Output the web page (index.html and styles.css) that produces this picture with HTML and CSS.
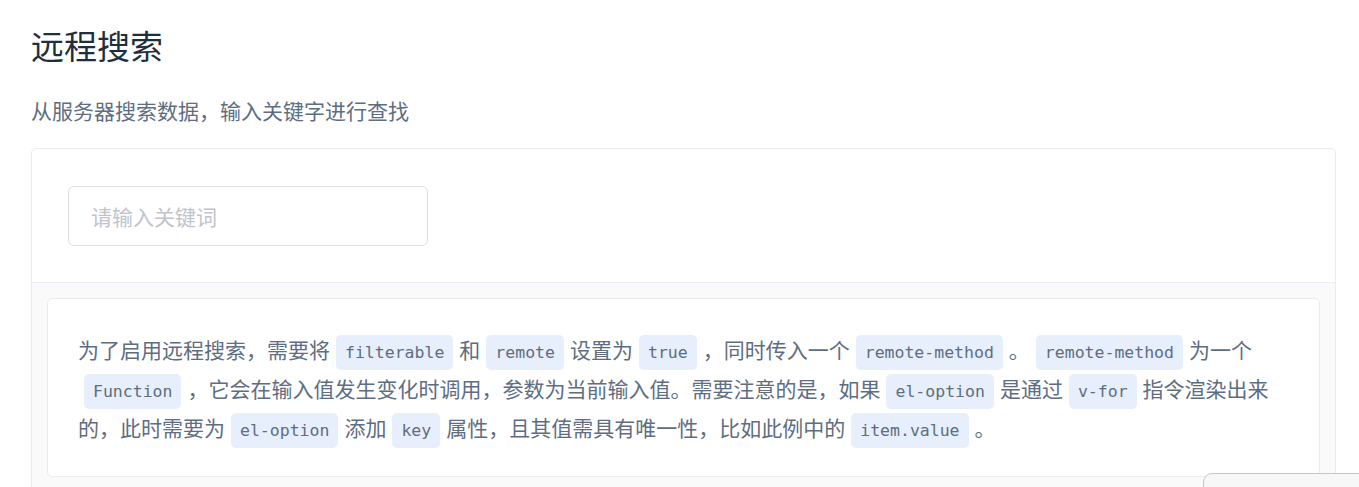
FILE: index.html
```html
<!DOCTYPE html>
<html lang="zh-CN">
<head>
<meta charset="utf-8">
<title>远程搜索</title>
<link rel="stylesheet" href="styles.css">
</head>
<body>
<main class="page">
  <h3 class="title">远程搜索</h3>
  <p class="lead">从服务器搜索数据，输入关键字进行查找</p>
  <section class="demo-block">
    <div class="source">
      <div class="input-wrap">
        <input class="input" type="text" placeholder="请输入关键词">
      </div>
    </div>
    <div class="meta">
      <div class="description">
        <p>为了启用远程搜索，需要将<code>filterable</code>和<code>remote</code>设置为<code>true</code>，同时传入一个<code>remote-method</code>。<code>remote-method</code>为一个<code>Function</code>，它会在输入值发生变化时调用，参数为当前输入值。需要注意的是，如果<code>el-option</code>是通过<code>v-for</code>指令渲染出来的，此时需要为<code>el-option</code>添加<code>key</code>属性，且其值需具有唯一性，比如此例中的<code>item.value</code>。</p>
      </div>
    </div>
  </section>
</main>
<div class="float-widget"></div>
</body>
</html>
```

FILE: styles.css
```css
html, body {
  margin: 0;
  padding: 0;
  background: #ffffff;
  overflow: hidden;
}

body {
  font-family: "Noto Sans CJK SC", "Noto Sans", sans-serif;
  color: #5e6d82;
}

.page {
  padding: 21px 23px 0 31px;
}

.title {
  margin: 0;
  font-size: 33px;
  font-weight: 400;
  line-height: 1.5;
  color: #1f2f3d;
}

.lead {
  margin: 24px 0 22px;
  font-size: 21px;
  line-height: 1.5;
  color: #5e6d82;
}

.demo-block {
  border: 1px solid #ebebeb;
  border-radius: 5px;
  overflow: hidden;
}

.source {
  padding: 37px 36px 36px;
}

.input-wrap {
  width: 360px;
}

.input {
  display: block;
  box-sizing: border-box;
  width: 100%;
  height: 60px;
  padding: 0 22px;
  border: 1px solid #dcdfe6;
  border-radius: 6px;
  font-family: "Noto Sans CJK SC", "Noto Sans", sans-serif;
  font-size: 21px;
  color: #606266;
  background: #fff;
  outline: none;
}

.input::placeholder {
  color: #c0c4cc;
}

.meta {
  background: #fafafa;
  border-top: 1px solid #eaeefb;
  padding: 15px 15px 15px;
}

.description {
  background: #fff;
  border: 1px solid #ebebeb;
  border-radius: 5px;
  padding: 31px 30px 29px;
}

.description p {
  margin: 0;
  font-size: 21px;
  line-height: 39px;
  color: #5e6d82;
}

.description code {
  font-family: "DejaVu Sans Mono", "Liberation Mono", monospace;
  font-size: 16.5px;
  line-height: 1;
  color: #5e6d82;
  background: #e6effb;
  border-radius: 5px;
  padding: 8px 9px;
  margin: 0 6px;
}

.float-widget {
  position: fixed;
  left: 1203px;
  top: 473px;
  width: 220px;
  height: 40px;
  border: 1px solid #c6c6c6;
  border-radius: 9px;
  background: #f7f7f7;
}
```
